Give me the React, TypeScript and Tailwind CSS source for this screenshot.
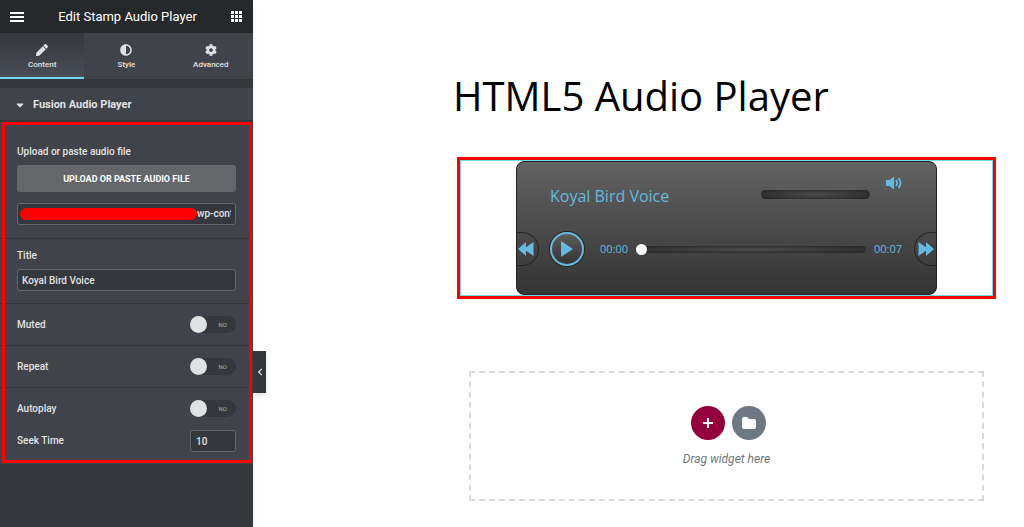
import { useState } from "react"
import { FaPen, FaAdjust, FaCog, FaCaretDown, FaChevronLeft } from "react-icons/fa"

const tabs = [
  { name: "Content", icon: FaPen },
  { name: "Style", icon: FaAdjust },
  { name: "Advanced", icon: FaCog },
]

function MenuIcon() {
  return (
    <svg viewBox="0 0 14 11" className="h-[11px] w-[14px]" fill="currentColor" aria-hidden="true">
      <path d="M0 1h14v2H0zM0 5h14v2H0zM0 9h14v2H0z" />
    </svg>
  )
}

function GridIcon() {
  return (
    <svg viewBox="0 0 11 11" className="h-[11px] w-[11px]" fill="currentColor" aria-hidden="true">
      {[0, 4, 8].map((y) => [0, 4, 8].map((x) => <rect key={`${x}-${y}`} x={x} y={y} width="3" height="3" />))}
    </svg>
  )
}

function VolumeIcon() {
  return (
    <svg viewBox="0 0 16 14" className="h-[14px] w-4" aria-hidden="true">
      <path d="M0 4h3.5L8 .5v13L3.5 10H0z" fill="currentColor" />
      <path d="M10 4q2.4 3 0 6M12.5 2q4 5 0 10" fill="none" stroke="currentColor" strokeWidth="1.8" />
    </svg>
  )
}

function SkipIcon({ back = false }: { back?: boolean }) {
  return (
    <svg viewBox="0 0 16 14" className="h-[14px] w-4" fill="currentColor" aria-hidden="true">
      {back ? <path d="M8 0v5.2L15.5 0v14L8 8.8V14L0 7z" /> : <path d="M8 0v5.2L.5 0v14L8 8.8V14l8-7z" />}
    </svg>
  )
}

function Toggle({ id, label }: { id: string; label: string }) {
  return (
    <div className="flex items-center justify-between">
      <label htmlFor={id}>{label}</label>
      <div className="relative flex">
        <input
          id={id}
          type="checkbox"
          className="peer h-[17px] w-[46px] appearance-none rounded-full bg-[#34383c] before:block before:h-[17px] before:w-[17px] before:rounded-full before:bg-[#e0e1e3] checked:before:ml-auto"
        />
        <span className="pointer-events-none absolute inset-y-0 right-[9px] flex items-center text-[6px] font-normal text-[#a4afb7] peer-checked:hidden">
          NO
        </span>
      </div>
    </div>
  )
}

function Sidebar() {
  const [active, setActive] = useState("Content")

  return (
    <aside className="relative w-[253px] shrink-0 bg-[#34383c] text-[10px] leading-[14px] font-medium text-[#e0e1e3] shadow-md">
      <header className="flex h-[33px] items-center justify-between bg-[#26292c] pr-[11px] pl-[10px] text-white">
        <button aria-label="Menu">
          <MenuIcon />
        </button>
        <h1 className="text-[13px] font-normal">Edit Stamp Audio Player</h1>
        <button aria-label="Widgets">
          <GridIcon />
        </button>
      </header>

      <nav className="mb-[9px] grid h-[46px] grid-cols-3 bg-[#404349]">
        {tabs.map(({ name, icon: Icon }) => (
          <button
            key={name}
            onClick={() => setActive(name)}
            className={
              active === name
                ? "flex flex-col items-center gap-[3px] border-b-2 border-[#71d7f7] bg-linear-to-b from-[#34383c] to-[#4a4d55] pt-[11px] text-[8px] leading-3"
                : "flex flex-col items-center gap-[3px] border-b-2 border-transparent pt-[11px] text-[8px] leading-3"
            }
          >
            <Icon className="h-3 w-3" />
            {name}
          </button>
        ))}
      </nav>

      <button className="flex h-8 w-full items-center gap-[9px] bg-[#404349] px-4 pt-px text-[11px] font-bold">
        <FaCaretDown className="h-3 w-2" />
        Fusion Audio Player
      </button>

      {/* Controls */}
      <div className="relative border-t-2 border-[#34383c] bg-[#404349]">
        <div className="border-b border-[#34383c] px-[17px] pt-[23px] pb-[13px]">
          <label htmlFor="audio-url" className="mb-[6px] block">
            Upload or paste audio file
          </label>
          <button className="mb-[11px] h-[27px] w-full rounded-[3px] bg-[#64666a] text-[9px] font-bold text-white">
            UPLOAD OR PASTE AUDIO FILE
          </button>
          <div className="flex h-[22px] items-center rounded-[3px] border border-[#64666a] bg-[#34383c] pr-1 pl-[2px]">
            <span className="h-3 w-[177px] shrink-0 rounded-full bg-[#ff0000]" />
            <input
              id="audio-url"
              type="text"
              defaultValue="wp-content"
              className="w-full min-w-0 bg-transparent outline-none"
            />
          </div>
        </div>

        <div className="border-b border-[#34383c] px-[17px] pt-[10px] pb-3">
          <label htmlFor="title" className="mb-[6px] block">
            Title
          </label>
          <input
            id="title"
            type="text"
            defaultValue="Koyal Bird Voice"
            className="h-[22px] w-full rounded-[3px] border border-[#64666a] bg-[#34383c] px-1 outline-none"
          />
        </div>

        <div className="border-b border-[#34383c] px-[17px] py-3">
          <Toggle id="muted" label="Muted" />
        </div>
        <div className="border-b border-[#34383c] px-[17px] py-3">
          <Toggle id="repeat" label="Repeat" />
        </div>
        <div className="px-[17px] py-3">
          <Toggle id="autoplay" label="Autoplay" />
          <div className="mt-[13px] flex items-center justify-between">
            <label htmlFor="seek">Seek Time</label>
            <input
              id="seek"
              type="text"
              defaultValue="10"
              className="h-[22px] w-[46px] rounded-[3px] border border-[#64666a] bg-[#34383c] px-[5px] outline-none"
            />
          </div>
        </div>

        <div className="pointer-events-none absolute top-0 right-px bottom-px left-[2px] border-3 border-[#ff0000]" />
      </div>

      <button
        aria-label="Collapse panel"
        className="absolute top-[351px] left-full flex h-[42px] w-[13px] items-center justify-center bg-[#34383c] shadow-md"
      >
        <FaChevronLeft className="h-2 w-2" />
      </button>
    </aside>
  )
}

function AudioPlayer() {
  return (
    <div className="mx-auto flex h-[134px] w-[421px] flex-col overflow-hidden rounded-lg border border-[#222] bg-linear-to-b from-[#636363] to-[#343434] text-[#67b8de]">
      <div className="flex pt-[14px] pr-[34px] pl-[33px]">
        <h3 className="pt-2 text-[16px] leading-6">Koyal Bird Voice</h3>
        <input
          type="range"
          aria-label="Volume"
          defaultValue="100"
          className="mt-[14px] ml-auto h-[9px] w-[109px] appearance-none rounded-full bg-radial from-[#4c4c4c] to-[#262626] [&::-webkit-slider-thumb]:appearance-none"
        />
        <button aria-label="Mute" className="ml-4 h-[14px]">
          <VolumeIcon />
        </button>
      </div>

      <div className="mt-6 flex items-center text-[11px]">
        <button
          aria-label="Rewind"
          className="flex h-[34px] w-[22px] items-center justify-center rounded-r-full border border-l-0 border-[#252525] pr-1"
        >
          <SkipIcon back />
        </button>
        <button
          aria-label="Play"
          className="ml-[11px] flex h-[34px] w-[34px] items-center justify-center rounded-full border-2 border-[#67b8de] bg-linear-to-b from-[#5c5c5c] to-[#343434] ring-1 ring-[#252525]"
        >
          <svg viewBox="0 0 12 16" className="h-4 w-3" fill="currentColor" aria-hidden="true">
            <path d="M0 0l12 8-12 8z" />
          </svg>
        </button>
        <span className="ml-4">00:00</span>
        <input
          type="range"
          aria-label="Seek"
          defaultValue="0"
          className="mx-2 h-[7px] min-w-0 flex-1 appearance-none rounded-full bg-radial from-[#4c4c4c] to-[#262626] [&::-webkit-slider-thumb]:h-[11px] [&::-webkit-slider-thumb]:w-[11px] [&::-webkit-slider-thumb]:appearance-none [&::-webkit-slider-thumb]:rounded-full [&::-webkit-slider-thumb]:bg-white"
        />
        <span className="mr-3">00:07</span>
        <button
          aria-label="Fast forward"
          className="flex h-[34px] w-[22px] items-center justify-center rounded-l-full border border-r-0 border-[#252525] pl-px"
        >
          <SkipIcon />
        </button>
      </div>
    </div>
  )
}

export default function App() {
  return (
    <div className="flex min-h-screen bg-white font-[Roboto,sans-serif]">
      <Sidebar />

      <main className="min-w-0 flex-1 pt-[67px] pr-7 pl-[200px] font-['Open_Sans',sans-serif]">
        <h2 className="text-[40px] leading-[57px] whitespace-nowrap text-black">HTML5 Audio Player</h2>

        <div className="mt-[33px] ml-1 border-3 border-[#ff0000]">
          <div className="border border-[#71d7f7]">
            <AudioPlayer />
          </div>
        </div>

        {/* Drop area */}
        <div className="mt-[72px] mr-3 ml-4 flex flex-col items-center border-2 border-dashed border-[#d5dadf] py-[33px] font-[Roboto,sans-serif]">
          <div className="flex gap-[7px] pl-1 text-white">
            <button
              aria-label="Add section"
              className="flex h-[34px] w-[34px] items-center justify-center rounded-full bg-[#93003c]"
            >
              <svg viewBox="0 0 12 12" className="h-3 w-3" fill="none" stroke="currentColor" strokeWidth="2" aria-hidden="true">
                <path d="M6 1v10M1 6h10" />
              </svg>
            </button>
            <button
              aria-label="Add template"
              className="flex h-[34px] w-[34px] items-center justify-center rounded-full bg-[#6d7882]"
            >
              <svg viewBox="0 0 14 12" className="h-3 w-[14px]" fill="currentColor" aria-hidden="true">
                <path d="M2 0h3l2 2h5q2 0 2 2v6q0 2-2 2H2q-2 0-2-2V2q0-2 2-2z" />
              </svg>
            </button>
          </div>
          <p className="mt-3 text-[12px] leading-[14px] text-[#6d7882] italic">Drag widget here</p>
        </div>
      </main>
    </div>
  )
}
